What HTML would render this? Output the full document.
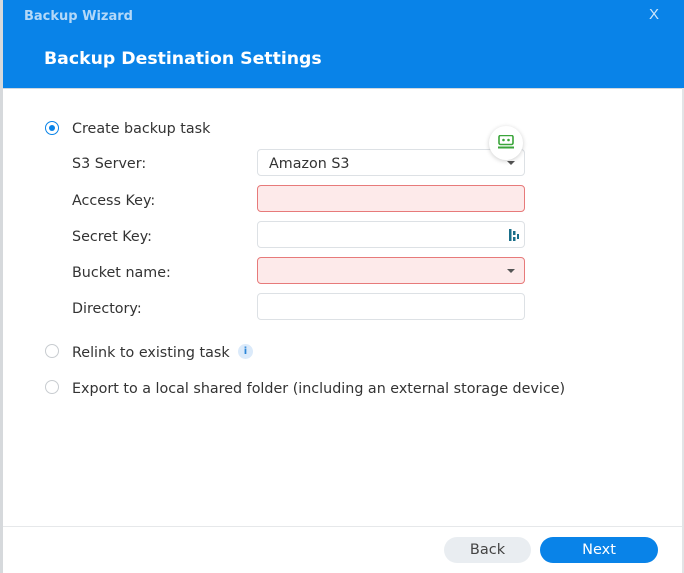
<!DOCTYPE html>
<html><head><style>
body{margin:0;width:684px;height:573px;overflow:hidden;background:#fff;font-family:"DejaVu Sans",sans-serif;position:relative}
.hd{position:absolute;left:0;top:0;width:684px;height:88px;background:#0983e8;border-bottom:1px solid #cfd8e0}
.lb{position:absolute;left:0;top:0;width:3px;height:573px;background:#d6d9dc}
.rb{position:absolute;right:0;top:88px;width:2px;height:485px;background:#e2e4e6}
.t1{position:absolute;left:24px;top:9px;color:#b3d8f8;font-weight:bold;font-size:13px}
.x{position:absolute;left:649px;top:6px;color:#cfe6fa;font-size:15px;font-family:"Liberation Sans",sans-serif}
.t2{position:absolute;left:44px;top:49px;color:#fff;font-weight:bold;font-size:17.3px}
.txt{position:absolute;font-size:14.3px;color:#333}
.rad{position:absolute;left:45px;width:14px;height:14px;border:1px solid #c8ccd0;border-radius:50%;box-sizing:border-box;background:#fff}
.rad.on{border-color:#0983e8}
.rad.on::after{content:"";position:absolute;left:3px;top:3px;width:6px;height:6px;border-radius:50%;background:#0983e8}
.in{position:absolute;left:257px;width:268px;height:27px;border:1px solid #dde1e5;border-radius:4px;box-sizing:border-box;background:#fff}
.err{border-color:#e77a7a;background:#fdeaea}
.ar{position:absolute;right:9px;top:11px;width:0;height:0;border-left:4px solid transparent;border-right:4px solid transparent;border-top:4px solid #555}
.ft{position:absolute;left:3px;top:526px;width:679px;height:1px;background:#e6e8ea}
.btn{position:absolute;top:537px;height:26px;border-radius:13px;font-size:14.5px;text-align:center;line-height:26px}
</style></head><body>
<div class="hd"></div><div class="lb"></div><div class="rb"></div>
<div class="t1">Backup Wizard</div><div class="x">X</div>
<div class="t2">Backup Destination Settings</div>
<div class="rad on" style="top:121px"></div><div class="txt" style="left:72px;top:121px">Create backup task</div>
<div class="txt" style="left:72px;top:156px">S3 Server:</div>
<div class="in" style="top:149px"><span style="position:absolute;left:11px;top:6px;font-size:14.3px;color:#333">Amazon S3</span><div class="ar"></div></div>
<div class="txt" style="left:72px;top:193px">Access Key:</div>
<div class="in err" style="top:185px"></div>
<div class="txt" style="left:72px;top:229px">Secret Key:</div>
<div class="in" style="top:221px"><svg style="position:absolute;right:4px;top:6px" width="12" height="14"><rect x="1" y="1" width="2.5" height="12" fill="#1a6f8a"/><rect x="5" y="3" width="2.5" height="4" fill="#1a6f8a"/><rect x="5" y="9" width="2.5" height="4" fill="#1a6f8a"/><rect x="9" y="6" width="2" height="5" fill="#1a6f8a"/></svg></div>
<div class="txt" style="left:72px;top:265px">Bucket name:</div>
<div class="in err" style="top:257px"><div class="ar"></div></div>
<div class="txt" style="left:72px;top:301px">Directory:</div>
<div class="in" style="top:293px"></div>
<div style="position:absolute;left:489px;top:126px;width:34px;height:34px;border-radius:50%;background:#fff;box-shadow:0 1px 5px rgba(0,0,0,.2)"><svg style="position:absolute;left:9px;top:9px" width="16" height="14"><rect x="1" y="0.5" width="14" height="9" rx="1.5" fill="none" stroke="#3aa53a" stroke-width="1.6"/><circle cx="5.5" cy="5" r="1.3" fill="#3aa53a"/><circle cx="10.5" cy="5" r="1.3" fill="#3aa53a"/><rect x="0" y="11.5" width="16" height="2" fill="#3aa53a"/></svg></div>
<div class="rad" style="top:344px"></div><div class="txt" style="left:72px;top:345px">Relink to existing task</div>
<div style="position:absolute;left:238px;top:344px;width:15px;height:15px;border-radius:50%;background:#dbeafa;color:#2b86d8;font-size:10px;font-weight:bold;text-align:center;line-height:15px">i</div>
<div class="rad" style="top:380px"></div><div class="txt" style="left:72px;top:381px">Export to a local shared folder (including an external storage device)</div>
<div class="ft"></div>
<div class="btn" style="left:444px;width:87px;background:#e9edf1;color:#444">Back</div>
<div class="btn" style="left:540px;width:118px;background:#0983e8;color:#fff">Next</div>
</body></html>
